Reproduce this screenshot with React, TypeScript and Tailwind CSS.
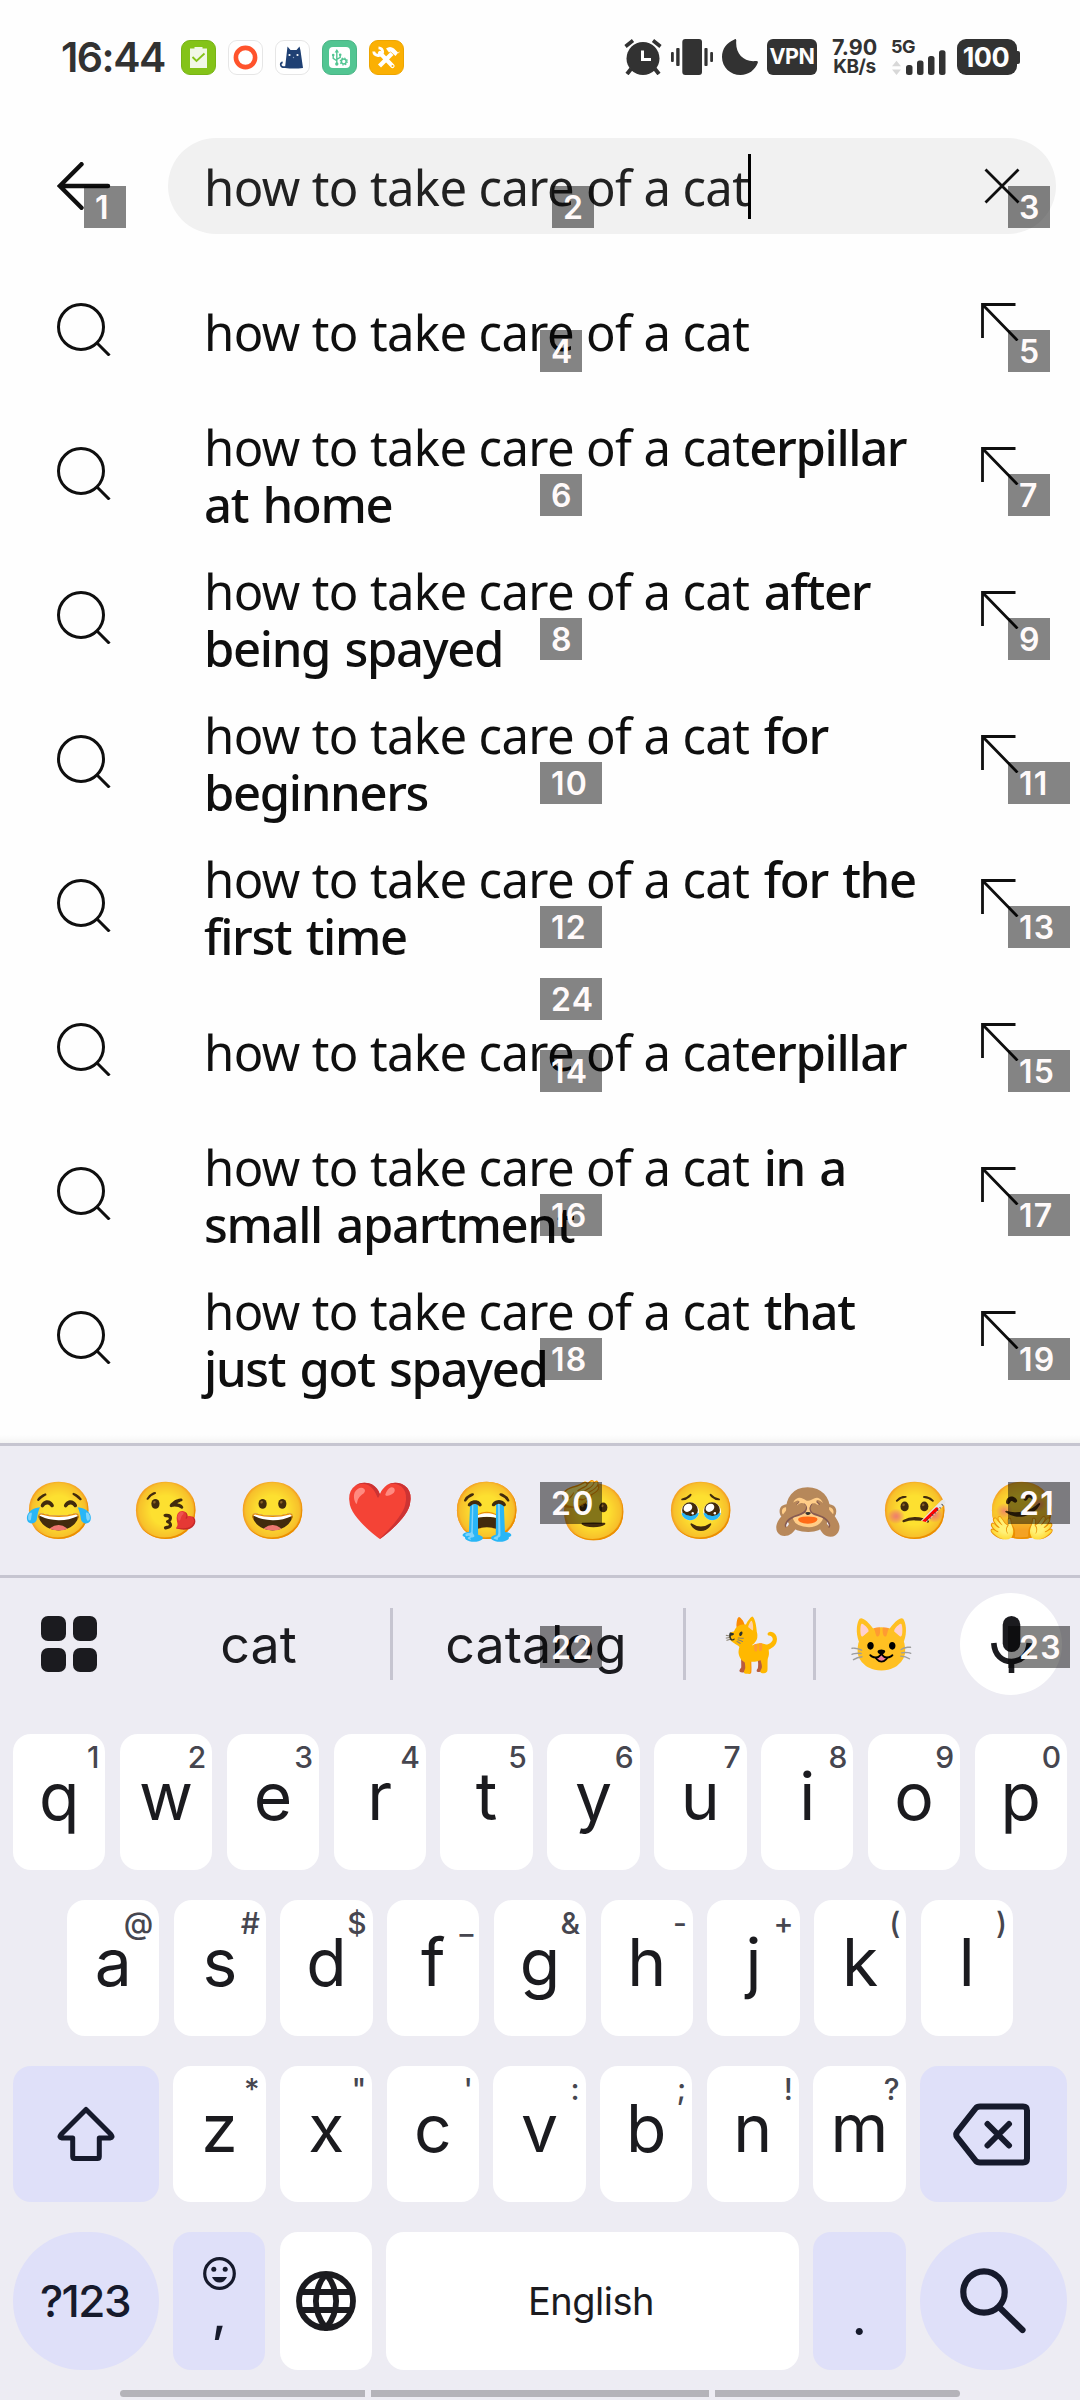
import type { ReactNode } from "react";

const completions = [
  "",
  "erpillar at home",
  " after being spayed",
  " for beginners",
  " for the first time",
  "erpillar",
  " in a small apartment",
  " that just got spayed",
];

function Badge({ n, className }: { n: number; className: string }) {
  return (
    <span
      className={`absolute z-20 flex h-[42px] items-center whitespace-nowrap bg-black/48 pt-[2px] pl-[11px] font-[Inter,sans-serif] text-[32px] leading-none font-semibold tracking-[1.300px] text-[#fffafa] ${n > 9 ? "w-[62px]" : "w-[42px]"} ${className}`}
    >
      {n}
    </span>
  );
}

function AppIcons() {
  return (
    <div className="flex gap-3">
      <svg className="size-[35px]" viewBox="0 0 35 35">
        <rect x=".5" y=".5" width="34" height="34" rx="8.500" fill="#84c318" stroke="#78b416" />
        <path d="M9 8.500h4.500v-1.500h8v1.500H26v19.500H9z" fill="#f1f8e6" />
        <path d="M11.500 17l4 4 8-7.500" fill="none" stroke="#84c318" strokeWidth="1.800" />
      </svg>
      <svg className="size-[35px]" viewBox="0 0 35 35">
        <rect x=".5" y=".5" width="34" height="34" rx="8.500" fill="#fff" stroke="#e6e6e6" />
        <circle cx="17.500" cy="17.500" r="9.600" fill="none" stroke="#ff532c" strokeWidth="4.600" />
      </svg>
      <svg className="size-[35px]" viewBox="0 0 35 35">
        <rect x=".5" y=".5" width="34" height="34" rx="8.500" fill="#fff" stroke="#e6e6e6" />
        <path d="M12.500 6.500l3 3.500h6l3-3.500 1 4 2.500 17.500q-9 1.200-18 0l1.500-13z" fill="#1f4073" />
        <path d="M11 27q-5 1-5.300-2.500q0-2 2-2.200" fill="none" stroke="#1f4073" strokeWidth="1.700" />
        <circle cx="14.500" cy="15" r="1.100" fill="#fff" />
        <circle cx="22.500" cy="15" r="1.100" fill="#fff" />
        <circle cx="18.500" cy="17.500" r=".7" fill="#8fa5c5" />
      </svg>
      <svg className="size-[35px]" viewBox="0 0 35 35">
        <rect x=".5" y=".5" width="34" height="34" rx="8.500" fill="#52c592" stroke="#4bb586" />
        <rect x="7" y="7" width="21" height="21" rx="4" fill="#fff" />
        <path d="M14.800 10.500v14M11.200 15v3.300l3.600 2.500M18.200 14.500v2.800l-3.400 2.200" fill="none" stroke="#52c592" strokeWidth="1.400" />
        <path d="M14.800 9l2.200 3.500h-4.400z" fill="#52c592" />
        <circle cx="14.800" cy="24" r="1.700" fill="#52c592" />
        <circle cx="11.200" cy="15" r="1.300" fill="#52c592" />
        <circle cx="18.200" cy="14.800" r="1.300" fill="#52c592" />
        <circle cx="21.800" cy="21.500" r="2.400" fill="none" stroke="#52c592" strokeWidth="1.500" />
        <circle cx="21.800" cy="21.500" r="3.500" fill="none" stroke="#52c592" strokeWidth="1.200" strokeDasharray="1.400 1.350" />
      </svg>
      <svg className="size-[35px]" viewBox="0 0 35 35">
        <rect x=".5" y=".5" width="34" height="34" rx="8.500" fill="#fbb003" stroke="#eda500" />
        <path d="M11 13L23.500 26" stroke="#fff" strokeWidth="4.200" strokeLinecap="round" />
        <path d="M23 13.500L10.500 26" stroke="#fff" strokeWidth="4.200" />
        <path d="M9.500 7.800q4 .2 4.200 4.200q-1 3.800-4.700 3.500q-4-.5-4.300-4" fill="none" stroke="#fff" strokeWidth="2.800" />
        <path d="M17 8.500q4-3 8 0l5 5 .5-2.500-4 5-5-4.500-1.500 1z" fill="#fff" />
        <circle cx="23.500" cy="26" r="1" fill="#fbb003" />
      </svg>
    </div>
  );
}

function StatusBar() {
  return (
    <div className="flex h-[114px] items-center pl-[61px] font-[Inter,sans-serif] text-[#323232]">
      <span className="w-[120px] text-[41px] leading-none font-semibold tracking-[-1.500px]">16:44</span>
      <AppIcons />
      <svg className="ml-[220px] h-9 w-[38px]" viewBox="0 0 38 36" fill="#323232">
        <circle cx="19" cy="19.500" r="16.500" />
        <path d="M1.500 7.500l7.500-6M36.500 7.500L29 1.500" stroke="#323232" strokeWidth="3.600" />
        <path d="M7 30l-4 5M31 30l4 5" stroke="#323232" strokeWidth="4" />
        <path d="M18.500 11.500v9h8.500" fill="none" stroke="#fff" strokeWidth="3" />
      </svg>
      <svg className="ml-[9px] h-9 w-[42px]" viewBox="0 0 42 36" fill="#323232">
        <rect x="11.300" width="19.700" height="36" rx="3" />
        <rect y="13" width="2.800" height="10" rx="1" />
        <rect x="5.200" y="9" width="3.400" height="18" rx="1" />
        <rect x="33.400" y="9" width="3.200" height="18" rx="1" />
        <rect x="39.200" y="13" width="2.800" height="10" rx="1" />
      </svg>
      <svg className="ml-[9px] h-9 w-9" viewBox="0 0 36 36" fill="#323232">
        <path d="M12 .7q2-1.500 2.300.8C13 14 21 23.500 34 22q2.500-.2 1.700 2C33 31 26.500 36 18.500 36C8.500 36 0 28.500 0 18C0 9.500 5 3.500 12 .7z" />
      </svg>
      <span className="ml-[9px] flex h-9 w-[50px] items-center justify-center rounded-[6px] bg-[#323232] text-[21.500px] leading-none font-bold tracking-[-0.500px] text-[#fdfdfd]">
        VPN
      </span>
      <span className="ml-[15px] flex h-[38px] w-[45px] flex-col justify-between text-center leading-[19px] font-bold whitespace-nowrap">
        <span className="text-[21.500px]">7.90</span>
        <span className="text-[19px] tracking-[-0.400px]">KB/s</span>
      </span>
      <div className="relative ml-[15px] h-9 w-[54px]">
        <svg className="size-full" viewBox="0 0 54 36" fill="#323232">
          <path d="M4.500 21.800l4.500 5.500H0zM4.500 36L0 30.500h9z" fill="#d8d8d8" />
          <rect x="14" y="26" width="6.500" height="10" rx="2.500" />
          <rect x="25" y="21.500" width="6.500" height="14.500" rx="2.500" />
          <rect x="36" y="17" width="6.500" height="19" rx="2.500" />
          <rect x="47" y="11.300" width="6.500" height="24.700" rx="2.500" />
        </svg>
        <span className="absolute -top-px -left-px text-[18px] leading-[17px] font-bold tracking-[-0.400px]">5G</span>
      </div>
      <span className="ml-[11px] flex h-9 w-[60px] items-center justify-center rounded-[9px] bg-[#323232] pr-[2px] text-[27px] leading-none font-bold tracking-[-0.500px] text-[#fdfdfd]">
        100
      </span>
      <span className="h-[13px] w-[3px] rounded-r-[2px] bg-[#323232]" />
    </div>
  );
}

function SearchIcon() {
  return (
    <svg className="mt-[-4px] ml-[55px] size-[56px] shrink-0" viewBox="0 0 56 56" fill="none" stroke="#0f0f0f" strokeWidth="3">
      <circle cx="26" cy="27" r="22.500" />
      <path d="M42 43l12.500 12.500" />
    </svg>
  );
}

function InsertIcon() {
  return (
    <svg className="mt-[-17px] h-[38px] w-[38px] shrink-0" viewBox="0 0 38 38" fill="none" stroke="#0f0f0f" strokeWidth="2.800">
      <path d="M1.500 35V1.500h33M1.500 1.500L36.500 37.500" />
    </svg>
  );
}

function Key({ c, h }: { c: string; h: string }) {
  return (
    <div className="relative flex h-[136px] min-w-0 flex-1 justify-center rounded-[18px] bg-white">
      <span className="mt-[28px] text-[66px] leading-[68px]">{c}</span>
      <span className="absolute top-[8px] right-[6px] text-[30px] leading-[30px] font-medium text-[#46464f]">{h}</span>
    </div>
  );
}

function KeyRow({ letters, hints }: { letters: string; hints: string }) {
  return (
    <>
      {letters.split("").map((c, i) => (
        <Key key={c} c={c} h={hints[i]} />
      ))}
    </>
  );
}

function ActionKey({ className, children }: { className: string; children: ReactNode }) {
  return <div className={`flex shrink-0 items-center justify-center text-[#161a2c] ${className}`}>{children}</div>;
}

const divider = <span className="h-[72px] w-[3px] shrink-0 bg-[#c6c5d0]" />;

function Keyboard() {
  return (
    <div className="relative mt-[33px] h-[957px] bg-[#edecf3] font-[Inter,sans-serif] text-[#1b1b1f]">
      <div className="absolute -top-2 h-2 w-full bg-linear-to-b from-transparent to-black/4" />
      <div className="relative flex h-[132px] items-center border-t-[3px] border-[#c6c5d0] pb-[2px] pl-[5px] text-[56px]">
        {["😂", "😘", "😀", "❤️", "😭", "🫡", "🥹", "🙈", "🤒", "🤗"].map((e) => (
          <span key={e} className="flex w-[107px] shrink-0 justify-center leading-none">
            {e}
          </span>
        ))}
        <Badge n={20} className="top-[36px] left-[540px]" />
        <Badge n={21} className="top-[36px] left-[1008px]" />
      </div>
      <div className="relative flex h-[135px] items-center border-t-[3px] border-[#c6c5d0] text-[52px] leading-[60px]">
        <div className="ml-[41px] grid w-14 shrink-0 grid-cols-2 gap-[7px]">
          {[0, 1, 2, 3].map((i) => (
            <span key={i} className="h-[24.500px] rounded-[7px] bg-[#1b1b1f]" />
          ))}
        </div>
        <span className="ml-[30px] w-[263px] shrink-0 pt-[2px] text-center">cat</span>
        {divider}
        <span className="w-[290px] shrink-0 pt-[2px] pr-[4px] text-center">catalog</span>
        {divider}
        <span className="flex w-[127px] shrink-0 justify-center pt-px pl-[3px]">🐈</span>
        {divider}
        <span className="flex w-[144px] shrink-0 justify-center pt-px pr-[13px]">😺</span>
        <span className="flex size-[102px] shrink-0 items-center justify-center rounded-full bg-white">
          <svg className="h-[57px] w-[41px]" viewBox="0 0 41 57" fill="none" stroke="#1b1b1f" strokeWidth="5.600">
            <rect x="11.700" width="17.600" height="36" rx="8.800" fill="#1b1b1f" stroke="none" />
            <path d="M2.800 27C3.500 39 11 45.500 20.500 45.500S37.500 39 38.200 27" />
            <path d="M20.500 45v12" />
          </svg>
        </span>
        <Badge n={22} className="top-[48px] left-[540px]" />
        <Badge n={23} className="top-[48px] left-[1008px]" />
      </div>
      <div className="mt-[24px] flex gap-[14.400px] px-[13px]">
        <KeyRow letters="qwertyuiop" hints="1234567890" />
      </div>
      <div className="mt-[30px] flex gap-[14.400px] px-[67px]">
        <KeyRow letters="asdfghjkl" hints="@#$_&-+()" />
      </div>
      <div className="mt-[30px] flex gap-[14.400px] px-[13px]">
        <ActionKey className="h-[136px] w-[146px] rounded-[18px] bg-[#dfe0f9]">
          <svg className="h-[56px] w-[58px]" viewBox="0 0 58 56" fill="none" stroke="currentColor" strokeWidth="5" strokeLinejoin="round">
            <path d="M29 3.500L4 28.500q-2.500 3 1 3.500h10.700V50.500q0 2 2 2h22.600q2 0 2-2V32H53q3.500-.5 1-3.500z" />
          </svg>
        </ActionKey>
        <KeyRow letters="zxcvbnm" hints={"*\"':;!?"} />
        <ActionKey className="h-[136px] w-[147px] rounded-[18px] bg-[#dfe0f9]">
          <svg className="ml-[-4px] h-[63px] w-[77px]" viewBox="0 0 77 63" fill="none" stroke="currentColor" strokeWidth="6" strokeLinejoin="round" strokeLinecap="round">
            <path d="M27 3.500H70q4 0 4 4V55.500q0 4-4 4H27q-3 0-4.500-2L4 34q-1.500-2.500 0-5L22.500 5.500q1.500-2 4.500-2zM34.500 21l21.500 21.500M56 21L34.500 42.500" />
          </svg>
        </ActionKey>
      </div>
      <div className="mt-[30px] flex gap-[14.400px] px-[13px]">
        <ActionKey className="h-[138px] w-[146px] rounded-full bg-[#dfe0f9] pr-[2px] text-[44px] font-medium tracking-[-1.500px]">
          ?123
        </ActionKey>
        <ActionKey className="h-[138px] w-[92px] flex-col rounded-[18px] bg-[#dfe0f9]">
          <svg className="mt-[5px] size-[33px]" viewBox="0 0 33 33" fill="none" stroke="currentColor" strokeWidth="3.200">
            <circle cx="16.500" cy="16.500" r="14.800" />
            <path d="M9 20h15q-2.500 5.500-7.500 5.500T9 20z" fill="currentColor" stroke="none" />
            <circle cx="10.800" cy="12.300" r="2.500" fill="currentColor" stroke="none" />
            <circle cx="22.200" cy="12.300" r="2.500" fill="currentColor" stroke="none" />
          </svg>
          <span className="h-[60px] text-[50px] leading-[46px] font-medium">,</span>
        </ActionKey>
        <ActionKey className="h-[138px] w-[92px] rounded-[18px] bg-white">
          <svg className="size-[60px]" viewBox="0 0 60 60" fill="none" stroke="#1b1b1f" strokeWidth="5.800">
            <circle cx="30" cy="30" r="27" />
            <path d="M5 21h50M5 39h50M30 3C16.500 19 16.500 41 30 57C43.500 41 43.500 19 30 3" />
          </svg>
        </ActionKey>
        <div className="flex h-[138px] flex-1 items-center justify-center rounded-[18px] bg-white pr-[3px] text-[38px] tracking-[-0.500px]">
          English
        </div>
        <ActionKey className="h-[138px] w-[92.500px] rounded-[18px] bg-[#dfe0f9]">
          <span className="mt-[30px] text-[54px] leading-[60px]">.</span>
        </ActionKey>
        <ActionKey className="h-[138px] w-[147px] rounded-full bg-[#dfe0f9]">
          <svg className="ml-[-2px] size-[66px]" viewBox="0 0 66 66" fill="none" stroke="currentColor" strokeWidth="6.200" strokeLinecap="round">
            <circle cx="24" cy="24" r="20.700" />
            <path d="M39.500 39.500l23 22.500" />
          </svg>
        </ActionKey>
      </div>
      <div className="mt-[20px] flex gap-[6px] pl-[120px]">
        <span className="h-[7px] w-[245px] rounded-l-full bg-[#b4b3b9]" />
        <span className="h-[7px] w-[338px] bg-[#b4b3b9]" />
        <span className="h-[7px] w-[245px] rounded-r-full bg-[#b4b3b9]" />
      </div>
    </div>
  );
}

export default function App() {
  return (
    <div className="relative h-[2400px] w-[1080px] overflow-hidden bg-[#fefefe] font-['Noto_Sans',sans-serif] text-[#0f0f0f]">
      <StatusBar />
      <div className="relative mt-6 flex h-24 items-center">
        <svg className="ml-[57px] h-[48px] w-[54px]" viewBox="0 0 54 48" fill="none" stroke="#0f0f0f" strokeWidth="4.400" strokeLinecap="round">
          <path d="M51 24H3M24.500 2.200L2.800 24l21.700 21.800" />
        </svg>
        <div className="ml-[57px] flex h-24 w-[888px] items-center rounded-full bg-[#f1f1f1] pl-[36px] text-[49px] tracking-[-0.620px] text-[#212121]">
          <span className="mt-[3px] w-[545px] whitespace-nowrap">how to take care of a cat</span>
          <span className="-ml-px h-[65px] w-[3px] bg-black" />
          <svg className="ml-[233px] size-9" viewBox="0 0 36 36" fill="none" stroke="#0f0f0f" strokeWidth="2.800">
            <path d="M1.500 1.500l33 33M34.500 1.500l-33 33" />
          </svg>
        </div>
        <Badge n={1} className="top-12 left-[84px]" />
        <Badge n={2} className="top-12 left-[552px]" />
        <Badge n={3} className="top-12 left-[1008px]" />
      </div>
      <div className="mt-6">
        {completions.map((rest, i) => (
          <div key={i} className="relative flex h-36 items-center">
            <SearchIcon />
            <p className="mt-[4px] ml-[93px] w-[777px] pr-[60px] text-[49px] leading-[57px] tracking-[-0.620px]">
              how to take care of a cat
              <span className="font-medium tracking-[-1.350px] [word-spacing:3px]">{rest}</span>
            </p>
            <InsertIcon />
            <Badge n={4 + i * 2} className="top-1/2 left-[540px]" />
            <Badge n={5 + i * 2} className="top-1/2 left-[1008px]" />
            {i === 5 && <Badge n={24} className="top-0 left-[540px]" />}
          </div>
        ))}
      </div>
      <Keyboard />
    </div>
  );
}
